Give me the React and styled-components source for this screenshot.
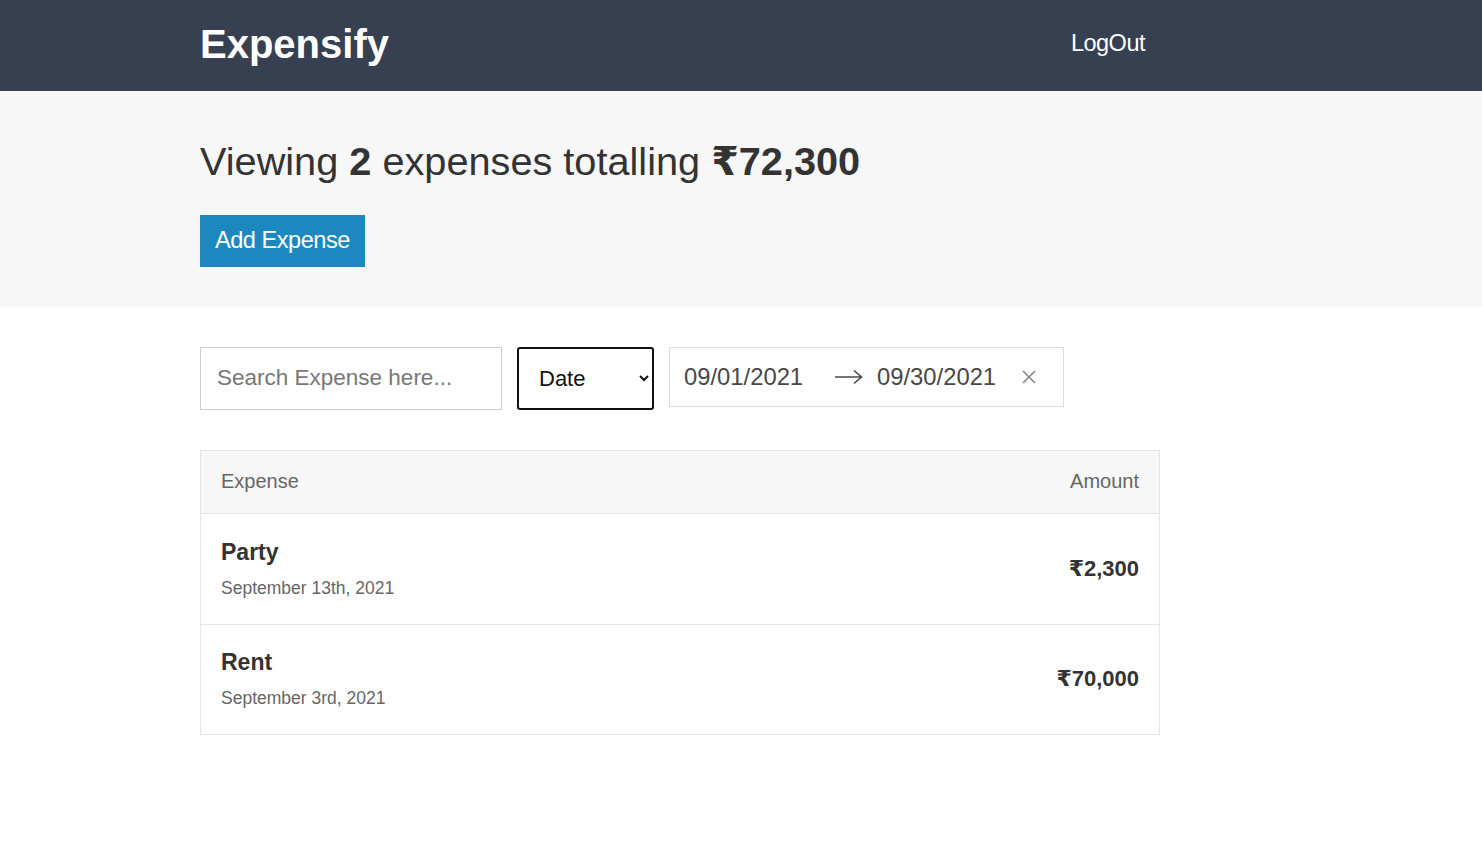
import React from 'react';
import styled, { createGlobalStyle } from 'styled-components';

const expenses = [
    { id: 1, description: 'Party', date: 'September 13th, 2021', amount: '₹2,300' },
    { id: 2, description: 'Rent', date: 'September 3rd, 2021', amount: '₹70,000' }
];

const App = () => {
    return (
        <>
            <GlobalStyle />
            <Header>
                <Container>
                    <HeaderRow>
                        <Title>Expensify</Title>
                        <LogoutButton>LogOut</LogoutButton>
                    </HeaderRow>
                </Container>
            </Header>
            <PageHeader>
                <Container>
                    <PageTitle>
                        Viewing <b>2</b> expenses totalling <b>₹72,300</b>
                    </PageTitle>
                    <AddButton>Add Expense</AddButton>
                </Container>
            </PageHeader>
            <Container>
                <Filters>
                    <SearchInput type="text" placeholder="Search Expense here..." />
                    <Select defaultValue="date">
                        <option value="date">Date</option>
                        <option value="amount">Amount</option>
                    </Select>
                    <DateRange>
                        <DateText $width={150}>09/01/2021</DateText>
                        <Arrow viewBox="0 0 30 16">
                            <path d="M1 8h27M20 1.5l7.5 6.5-7.5 6.5" fill="none" stroke="#484848" strokeWidth="1.6" />
                        </Arrow>
                        <DateText $width={144}>09/30/2021</DateText>
                        <ClearIcon viewBox="0 0 16 16">
                            <path d="M2 2l12 12M14 2L2 14" stroke="#888" strokeWidth="1.7" />
                        </ClearIcon>
                    </DateRange>
                </Filters>
                <Table>
                    <TableHead>
                        <span>Expense</span>
                        <span>Amount</span>
                    </TableHead>
                    {expenses.map((e) => (
                        <Row key={e.id}>
                            <div>
                                <ItemTitle>{e.description}</ItemTitle>
                                <ItemDate>{e.date}</ItemDate>
                            </div>
                            <ItemAmount>{e.amount}</ItemAmount>
                        </Row>
                    ))}
                </Table>
            </Container>
        </>
    );
}

const GlobalStyle = createGlobalStyle`
body {
margin: 0;
font-family: 'Liberation Sans', Arial, 'DejaVu Sans', sans-serif;
color: #333;
background: #fff;
}
`;

const Container = styled.div`
width: 960px;
margin-left: 200px;
`;

const Header = styled.header`
background: #364051;
height: 91px;
`;

const HeaderRow = styled.div`
display: flex;
align-items: center;
justify-content: space-between;
height: 91px;
padding-right: 15px;
`;

const Title = styled.h1`
color: white;
font-size: 40px;
font-weight: 700;
margin: 0;
margin-top: -2px;
`;

const LogoutButton = styled.button`
background: none;
border: none;
color: white;
font-family: inherit;
font-size: 23.5px;
letter-spacing: -0.5px;
padding: 0;
margin-top: -4px;
`;

const PageHeader = styled.div`
background: #f7f7f7;
padding: 47px 0 40px;
`;

const PageTitle = styled.h2`
font-size: 39.7px;
font-weight: 400;
margin: 0 0 29px;
line-height: 1.2;
b {
font-weight: 700;
}
`;

const AddButton = styled.button`
background: #1c88bf;
border: none;
color: white;
font-family: inherit;
font-size: 23.6px;
letter-spacing: -0.5px;
height: 52px;
padding: 0 15px;
`;

const Filters = styled.div`
display: flex;
align-items: flex-start;
gap: 15px;
margin: 40px 0 40px;
`;

const SearchInput = styled.input`
box-sizing: border-box;
width: 302px;
height: 63px;
border: 1px solid #cacccd;
font-family: inherit;
font-size: 22.5px;
padding: 0 16px;
&::placeholder {
color: #777;
}
`;

const Select = styled.select`
box-sizing: border-box;
width: 137px;
height: 63px;
border: 2px solid #111;
border-radius: 3px;
background: white;
font-family: inherit;
font-size: 22px;
padding: 0 16px;
color: #111;
`;

const DateRange = styled.div`
box-sizing: border-box;
width: 395px;
height: 60px;
border: 1px solid #dbdbdb;
display: flex;
align-items: center;
padding: 0 14px;
background: white;
`;

const DateText = styled.span`
font-size: 23.8px;
color: #484848;
width: ${(p) => p.$width}px;
`;

const Arrow = styled.svg`
width: 30px;
height: 16px;
margin: 0 13px 0 0;
`;

const ClearIcon = styled.svg`
width: 16px;
height: 16px;
margin-left: 0;
`;

const Table = styled.div`
border: 1px solid #e5e5e5;
`;

const TableHead = styled.div`
display: flex;
justify-content: space-between;
align-items: center;
background: #f7f7f7;
border-bottom: 1px solid #e5e5e5;
height: 62px;
padding: 0 20px;
font-size: 20px;
color: #666;
`;

const Row = styled.div`
box-sizing: border-box;
display: flex;
justify-content: space-between;
align-items: center;
height: 110px;
padding: 0 20px;
& + & {
border-top: 1px solid #e5e5e5;
}
`;

const ItemTitle = styled.h3`
margin: 0 0 12px;
font-size: 23px;
font-weight: 700;
color: #333;
`;

const ItemDate = styled.span`
font-size: 17.5px;
color: #666;
`;

const ItemAmount = styled.h3`
margin: 0;
font-size: 22px;
font-weight: 700;
color: #333;
`;

export default App;
